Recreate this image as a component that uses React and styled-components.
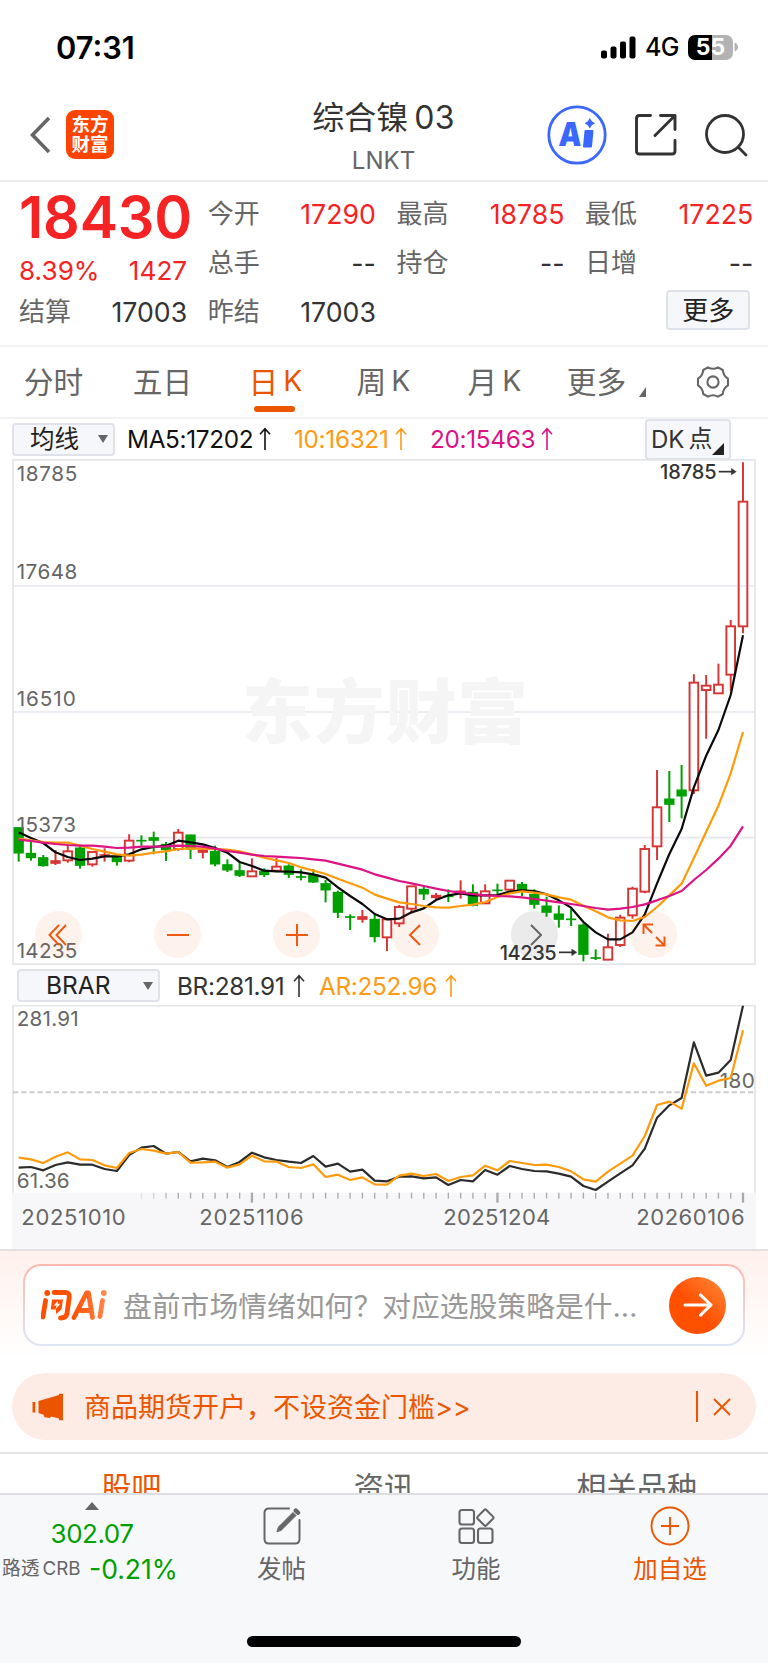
import styled, { createGlobalStyle } from "styled-components";

const GlobalStyle = createGlobalStyle`
    * {
        box-sizing: border-box;
    }
    body {
        margin: 0;
        background: #fff;
        font-family: Inter, "Noto Sans CJK SC", sans-serif;
        color: #333;
    }
    svg {
        display: block;
        flex: none;
    }
`;

// chart units are a third of a pixel
const STEP = 36.83;
const posX = (i) => 20 + i * STEP;
const toPoints = (data) => data.map((y, i) => `${posX(i).toFixed(1)},${y}`).join(" ");

// g: falling, r: rising, s: rising with a solid body / high, top, bottom, low
const candles = [
    ["g", 1105, 1105, 1183, 1208], ["g", 1148, 1182, 1197, 1205], ["g", 1188, 1195, 1221, 1223],
    ["s", 1173, 1204, 1214, 1218], ["r", 1159, 1176, 1205, 1211], ["g", 1158, 1166, 1220, 1229],
    ["r", 1178, 1178, 1217, 1223], ["s", 1168, 1186, 1190, 1208], ["g", 1187, 1191, 1209, 1220],
    ["r", 1126, 1144, 1206, 1210], ["g", 1129, 1143, 1147, 1160], ["g", 1118, 1135, 1145, 1186],
    ["g", 1149, 1155, 1173, 1206], ["r", 1110, 1120, 1171, 1175], ["g", 1127, 1127, 1171, 1200],
    ["s", 1165, 1172, 1181, 1198], ["g", 1160, 1176, 1216, 1222], ["g", 1201, 1216, 1234, 1239],
    ["g", 1210, 1234, 1250, 1254], ["r", 1198, 1236, 1253, 1253], ["g", 1228, 1236, 1248, 1254],
    ["r", 1197, 1222, 1236, 1240], ["g", 1216, 1220, 1247, 1257], ["g", 1231, 1252, 1256, 1264],
    ["g", 1230, 1246, 1270, 1272], ["g", 1263, 1273, 1294, 1330], ["g", 1295, 1299, 1361, 1377],
    ["g", 1366, 1372, 1376, 1413], ["s", 1353, 1372, 1382, 1391], ["g", 1366, 1380, 1434, 1450],
    ["r", 1378, 1380, 1436, 1476], ["r", 1338, 1343, 1394, 1404], ["r", 1281, 1281, 1350, 1363],
    ["g", 1281, 1290, 1306, 1323], ["s", 1302, 1308, 1317, 1320], ["g", 1291, 1310, 1314, 1329],
    ["s", 1264, 1295, 1299, 1319], ["g", 1276, 1299, 1340, 1342], ["r", 1276, 1296, 1334, 1334],
    ["g", 1274, 1292, 1296, 1306], ["r", 1264, 1264, 1293, 1293], ["g", 1269, 1275, 1296, 1311],
    ["g", 1291, 1305, 1337, 1349], ["g", 1313, 1340, 1361, 1373], ["g", 1339, 1364, 1382, 1406],
    ["g", 1350, 1379, 1383, 1401], ["g", 1393, 1397, 1487, 1507], ["g", 1471, 1495, 1499, 1503],
    ["r", 1424, 1464, 1503, 1503], ["r", 1367, 1375, 1459, 1464], ["r", 1283, 1288, 1370, 1379],
    ["r", 1158, 1169, 1299, 1303], ["r", 933, 1044, 1163, 1203], ["g", 936, 1019, 1037, 1089],
    ["g", 918, 992, 1012, 1078], ["r", 646, 670, 995, 1005], ["r", 648, 679, 694, 839],
    ["r", 614, 676, 704, 704], ["r", 483, 501, 648, 695], ["r", 10, 127, 503, 523],
];

const ma5 = [
    1120, 1137, 1152, 1180, 1194, 1203, 1199, 1192, 1192, 1186, 1171, 1164, 1160, 1145, 1150,
    1156, 1167, 1181, 1209, 1221, 1235, 1237, 1238, 1240, 1246, 1256, 1285, 1311, 1335, 1365,
    1381, 1379, 1360, 1348, 1323, 1309, 1303, 1309, 1309, 1308, 1298, 1294, 1296, 1306, 1324,
    1346, 1389, 1420, 1441, 1441, 1420, 1366, 1273, 1185, 1110, 985, 890, 813, 708, 529,
];
const ma10 = [
    1139, 1144, 1149, 1151, 1151, 1160, 1170, 1178, 1186, 1190, 1187, 1181, 1177, 1170, 1168,
    1169, 1170, 1172, 1177, 1186, 1196, 1204, 1212, 1225, 1235, 1245, 1259, 1273, 1286, 1307,
    1319, 1330, 1335, 1341, 1345, 1346, 1341, 1337, 1329, 1314, 1303, 1297, 1301, 1306, 1315,
    1322, 1340, 1357, 1375, 1384, 1386, 1374, 1344, 1309, 1274, 1198, 1118, 1040, 943, 819,
];
const ma20 = [
    1142, 1146, 1151, 1155, 1158, 1160, 1160, 1163, 1167, 1166, 1163, 1163, 1162, 1160, 1161,
    1163, 1169, 1176, 1181, 1187, 1191, 1193, 1195, 1197, 1201, 1205, 1214, 1223, 1232, 1246,
    1256, 1266, 1273, 1281, 1289, 1296, 1301, 1305, 1309, 1311, 1312, 1315, 1320, 1325, 1330,
    1335, 1341, 1347, 1352, 1349, 1344, 1336, 1324, 1311, 1296, 1263, 1233, 1199, 1160, 1102,
];
const br = [
    503, 501, 511, 495, 487, 494, 494, 507, 513, 465, 443, 438, 461, 456, 484, 476, 481, 501,
    486, 458, 472, 480, 485, 489, 468, 500, 491, 515, 509, 542, 544, 530, 529, 535, 532, 555,
    540, 544, 510, 524, 498, 507, 513, 514, 521, 530, 558, 570, 545, 520, 496, 446, 353, 316,
    294, 127, 227, 218, 180, 17,
];
const ar = [
    473, 478, 489, 470, 457, 478, 480, 496, 504, 459, 447, 452, 461, 456, 488, 487, 485, 503,
    493, 467, 484, 485, 501, 504, 493, 531, 524, 540, 532, 553, 554, 527, 521, 528, 522, 543,
    531, 526, 497, 511, 483, 489, 495, 494, 501, 514, 538, 545, 515, 491, 467, 408, 315, 305,
    326, 190, 257, 242, 234, 91,
];

const quotes = [
    [["今开", "17290", "up"], ["总手", "--"], ["昨结", "17003"]],
    [["最高", "18785", "up"], ["持仓", "--"]],
    [["最低", "17225", "up"], ["日增", "--"]],
];

const Candle = ({ index, kind, high, top, bottom, low }) => {
    const x = posX(index);
    const color = kind === "g" ? "#00a000" : "#d73434";
    if (kind === "r") {
        return (
            <g stroke={color} strokeWidth="5.8" fill="none">
                <path d={`M${x} ${high}V${top}M${x} ${bottom}V${low}`} />
                <rect x={x - 13} y={top + 1} width="26" height={bottom - top - 2} />
            </g>
        );
    }
    return (
        <g fill={color}>
            <rect x={x - 3} y={high} width="6" height={low - high} />
            <rect x={x - 15.5} y={top - 0.5} width="31" height={bottom - top + 1} />
        </g>
    );
};

const PriceChart = () => (
    <svg width="744" height="506" viewBox="0 0 2232 1518">
        <g stroke="#e6e8ee" strokeWidth="5">
            <path d="M3 381H2230M3 759H2230M3 1136H2230" />
            <rect x="3" y="2.5" width="2226" height="1513" fill="none" stroke="#e4e5e8" strokeWidth="5" />
        </g>
        <WatermarkText x="690" y="838" textLength="858">东方财富</WatermarkText>
        {candles.map(([kind, high, top, bottom, low], i) => (
            <Candle key={i} index={i} kind={kind} high={high} top={top} bottom={bottom} low={low} />
        ))}
        <g fill="none" strokeWidth="6.6" strokeLinejoin="round">
            <polyline points={toPoints(ma5)} stroke="#0a0a0a" />
            <polyline points={toPoints(ma10)} stroke="#ff9a0a" />
            <polyline points={toPoints(ma20)} stroke="#dd1285" />
        </g>
        <ScaleText x="14" y="67" textLength="182">18785</ScaleText>
        <ScaleText x="14" y="361" textLength="182">17648</ScaleText>
        <ScaleText x="14" y="740" textLength="177">16510</ScaleText>
        <ScaleText x="14" y="1119" textLength="178">15373</ScaleText>
        <ScaleText x="14" y="1498" textLength="182">14235</ScaleText>
        <MarkText x="1944" y="61" textLength="170">18785</MarkText>
        <MarkText x="1463" y="1504" textLength="171">14235</MarkText>
        <g stroke="#333" strokeWidth="5" fill="#333">
            <path d="M2120 38H2160" />
            <path d="M2158 28L2173 38L2158 48Z" strokeWidth="1" />
            <path d="M1641 1480H1682" />
            <path d="M1679 1470L1695 1480L1679 1490Z" strokeWidth="1" />
        </g>
    </svg>
);

const BrarChart = () => (
    <svg width="744" height="244" viewBox="0 15 2232 732">
        <rect x="0" y="578" width="2232" height="168" fill="#f7f7fa" />
        <path d="M3 578V17H2229V578" fill="none" stroke="#e4e5e8" strokeWidth="5" />
        <path d="M3 277H2229" stroke="#ccc" strokeWidth="6" strokeDasharray="16 8.5" />
        <g stroke="#aaa" strokeWidth="4">
            {br.map((v, i) => i > 9 && (
                <path
                    key={i}
                    d={`M${posX(i)} 578V${i % 20 === 19 ? 608 : 596}`}
                    strokeWidth={i % 20 === 19 ? 7 : 4}
                    opacity={i < 13 ? (i - 9) / 4 : 1}
                />
            ))}
        </g>
        <ScaleText x="14" y="77" textLength="186">281.91</ScaleText>
        <ScaleText x="14" y="565" textLength="159">61.36</ScaleText>
        <ScaleText x="2123" y="264" textLength="105">180</ScaleText>
        <g fill="none" strokeWidth="6.6" strokeLinejoin="round">
            <polyline points={toPoints(br)} stroke="#2b2b2b" />
            <polyline points={toPoints(ar)} stroke="#ff9a0a" />
        </g>
        <DateText x="28" y="674" textLength="313">20251010</DateText>
        <DateText x="562" y="674" textLength="313">20251106</DateText>
        <DateText x="1294" y="674" textLength="321">20251204</DateText>
        <DateText x="1873" y="674" textLength="325">20260106</DateText>
    </svg>
);

const UpArrow = () => (
    <svg width="14" height="24" viewBox="0 0 14 24" fill="none" stroke="currentColor" strokeWidth="1.6">
        <path d="M7 23V1.8M2 7.2L7 1.8L12 7.2" />
    </svg>
);

const App = () => {
    return (
        <Page>
            <GlobalStyle />
            <StatusBar>
                <Clock>07:31</Clock>
                <svg width="35" height="23" viewBox="0 0 35 23">
                    <rect x="0" y="14.5" width="6" height="8" rx="2" />
                    <rect x="9.5" y="10.5" width="6" height="12" rx="2" />
                    <rect x="19" y="5.5" width="6" height="17" rx="2" />
                    <rect x="28.5" y="0.5" width="6" height="22" rx="2" />
                </svg>
                <Network>4G</Network>
                <Battery>55</Battery>
                <svg width="4" height="10" viewBox="0 0 4 10" fill="#b3b3b3">
                    <path d="M0.5 0.5Q4 2 4 5T0.5 9.5Z" />
                </svg>
            </StatusBar>

            <Header>
                <svg width="22" height="38" viewBox="0 0 22 38" fill="none" stroke="#666" strokeWidth="3.6">
                    <path d="M20 2L3.5 19L20 36" />
                </svg>
                <Logo>东方<br />财富</Logo>
                <Title>
                    <Name>综合镍<span>03</span></Name>
                    <Code>LNKT</Code>
                </Title>
                <HeaderIcons>
                    <svg width="60" height="60" viewBox="0 0 60 60" fill="#3a68ff">
                        <circle cx="30" cy="30" r="28.2" fill="#fff" stroke="#3a68ff" strokeWidth="2.8" />
                        <AiText x="13.5" y="41" fontSize="33" textLength="23" lengthAdjust="spacingAndGlyphs" transform="skewX(-3)">A</AiText>
                        <path d="M38.5 26H45.5L44 41.5H37Z" strokeLinejoin="round" stroke="#3a68ff" strokeWidth="2" />
                        <path d="M42.8 13L44.8 16.2L48 18.2L44.8 20.2L42.8 23.4L40.8 20.2L37.6 18.2L40.8 16.2Z" />
                    </svg>
                    <svg width="42" height="42" viewBox="0 0 42 42" fill="none" stroke="#333" strokeWidth="2.9" strokeLinecap="round" strokeLinejoin="round">
                        <path d="M15.5 1.5H4.5Q1.5 1.5 1.5 4.5V37Q1.5 40 4.5 40H37Q40 40 40 37V26.5" />
                        <path d="M25.5 1.5H40V15.5M40 1.5L20 21.5" />
                    </svg>
                    <svg width="43" height="43" viewBox="0 0 43 43" fill="none" stroke="#333" strokeWidth="2.8" strokeLinecap="round">
                        <circle cx="20" cy="20" r="18.5" />
                        <path d="M33.5 33.5L41 41" />
                    </svg>
                </HeaderIcons>
            </Header>

            <Quote>
                <Summary>
                    <Price>18430</Price>
                    <Change>
                        <span>8.39%</span>
                        <span>1427</span>
                    </Change>
                    <Field>
                        <Label>结算</Label>
                        <Value>17003</Value>
                    </Field>
                </Summary>
                {quotes.map((column, i) => (
                    <Column key={i}>
                        {column.map(([label, value, trend]) => (
                            <Field key={label}>
                                <Label>{label}</Label>
                                <Value $trend={trend}>{value}</Value>
                            </Field>
                        ))}
                        {i === 2 && <MoreButton>更多</MoreButton>}
                    </Column>
                ))}
            </Quote>

            <PeriodTabs>
                <Period $width={107}>分时</Period>
                <Period $width={111}>五日</Period>
                <Period $width={115} $active>日<span>K</span></Period>
                <Period $width={101}>周<span>K</span></Period>
                <Period $width={121}>月<span>K</span></Period>
                <Period $width={83}>
                    更多
                </Period>
                <svg width="7" height="10" viewBox="0 0 7 10" fill="#666">
                    <path d="M7 0V10H0Z" />
                </svg>
                <Gear width="34" height="34" viewBox="0 0 34 34" fill="none" stroke="#666" strokeWidth="2.1" strokeLinejoin="round">
                    <path d="M12 2.3Q17 5.2 22 2.3L26.8 5Q27.2 10.8 32 13.6V20.4Q27.2 23.2 26.8 29L22 31.7Q17 28.8 12 31.7L7.2 29Q6.8 23.2 2 20.4V13.6Q6.8 10.8 7.2 5Z" />
                    <circle cx="17" cy="17" r="5.6" />
                </Gear>
            </PeriodTabs>

            <Indicators>
                <Picker $width={103} $pad={16}>
                    均线
                    <Caret />
                </Picker>
                <Reading $color="#111" $left={12} $width={131}>MA5:17202</Reading>
                <Arrow $color="#111"><UpArrow /></Arrow>
                <Reading $color="#ff9a14" $left={22} $width={100}>10:16321</Reading>
                <Arrow $color="#ff9a14"><UpArrow /></Arrow>
                <Reading $color="#dd1285" $left={22} $width={110}>20:15463</Reading>
                <Arrow $color="#dd1285"><UpArrow /></Arrow>
                <DkButton>
                    DK<b>点</b>
                    <svg width="12" height="12" viewBox="0 0 12 12" fill="#222">
                        <path d="M12 0V12H0Z" />
                    </svg>
                </DkButton>
            </Indicators>

            <ChartPanel>
                <PriceChart />
                <Controls>
                    <Control>
                        <svg width="22" height="22" viewBox="0 0 22 22"><path d="M11 1L1.5 11L11 21M18 1L8.5 11L18 21" /></svg>
                    </Control>
                    <Control>
                        <svg width="24" height="24" viewBox="0 0 24 24"><path d="M1 12H23" /></svg>
                    </Control>
                    <Control>
                        <svg width="24" height="24" viewBox="0 0 24 24"><path d="M1 12H23M12 1V23" /></svg>
                    </Control>
                    <Control>
                        <svg width="16" height="22" viewBox="0 0 16 22"><path d="M12 1L2 11L12 21" /></svg>
                    </Control>
                    <Control $muted>
                        <svg width="14" height="22" viewBox="0 0 14 22"><path d="M3 1L13 11L3 21" /></svg>
                    </Control>
                    <Control>
                        <svg width="24" height="24" viewBox="0 0 24 24"><path d="M1.5 11V1.5H11M1.5 1.5L10 10M13.5 22.5H22.5V13.5M22.5 22.5L14 14" /></svg>
                    </Control>
                </Controls>
            </ChartPanel>

            <Indicators $top={1}>
                <Picker $width={143} $pad={27} $inset={5}>
                    BRAR
                    <Caret />
                </Picker>
                <Reading $color="#333" $left={17} $width={115}>BR:281.91</Reading>
                <Arrow $color="#333"><UpArrow /></Arrow>
                <Reading $color="#ff9a14" $left={13} $width={125}>AR:252.96</Reading>
                <Arrow $color="#ff9a14"><UpArrow /></Arrow>
            </Indicators>
            <ChartPanel>
                <BrarChart />
            </ChartPanel>

            <AskArea>
                <AskBox>
                    <svg width="68" height="34" viewBox="0 0 68 34">
                        <defs>
                            <linearGradient id="ask" gradientUnits="userSpaceOnUse" x1="0" x2="68" y1="0" y2="0">
                                <stop offset="0.45" stopColor="#ff5000" />
                                <stop offset="1" stopColor="#ff8a50" />
                            </linearGradient>
                        </defs>
                        <g fill="none" stroke="url(#ask)" strokeWidth="4.8" strokeLinecap="round" strokeLinejoin="round">
                            <path d="M4.6 12.5L1.9 29" />
                            <path d="M13 4.5H24Q29 4.5 28.2 9.5L26 25.5Q25.2 30 19.5 30" />
                            <path d="M33 29.5L45.5 5H47.5L51.5 29.5M40 22.5H48" />
                            <path d="M61.5 12.5L59 28.5" />
                        </g>
                        <circle cx="6.2" cy="5" r="2.9" fill="#ff5000" />
                        <circle cx="62.8" cy="5" r="2.9" fill="#ff8a50" />
                        <path d="M11 11.5H22L20.5 21.5L15 26V21.5H9.8Z" fill="#ff5000" />
                        <path d="M17 12.8L12.8 17.4H15.6L14.6 21L19.4 15.8H16.5Z" fill="#fff" />
                    </svg>
                    <AskText>盘前市场情绪如何？对应选股策略是什…</AskText>
                    <AskButton>
                        <svg width="30" height="24" viewBox="0 0 30 24" fill="none" stroke="#fff" strokeWidth="3" strokeLinecap="round" strokeLinejoin="round">
                            <path d="M2 12H28M17.5 1.8L28 12L17.5 22.2" />
                        </svg>
                    </AskButton>
                </AskBox>
            </AskArea>

            <Promo>
                <svg width="33" height="28" viewBox="0 0 33 28" fill="#ec5500">
                    <path d="M0.5 9H3.3V19.5H0.5ZM6.5 8L27 2V0.8H31V27.3H27V25.6L19 23.5L18 25L12.5 24.2L11.5 21.8L6.5 20Z" />
                </svg>
                <PromoText>商品期货开户，不设资金门槛&gt;&gt;</PromoText>
                <PromoDivider />
                <svg width="18" height="18" viewBox="0 0 18 18" stroke="#ec5500" strokeWidth="1.9">
                    <path d="M1 1L17 17M17 1L1 17" />
                </svg>
            </Promo>

            <SectionTabs>
                <Section $active>股吧</Section>
                <Section>资讯</Section>
                <Section>相关品种</Section>
            </SectionTabs>

            <BottomBar>
                <Index>
                    <svg width="14" height="8" viewBox="0 0 14 8" fill="#666">
                        <path d="M7 0L14 8H0Z" />
                    </svg>
                    <IndexValue>302.07</IndexValue>
                    <IndexChange>
                        <small>路透<i>CRB</i></small>
                        <span>-0.21%</span>
                    </IndexChange>
                </Index>
                <Action $width={195}>
                    <svg width="38" height="38" viewBox="0 0 38 38" fill="none" stroke="#666" strokeWidth="2" strokeLinecap="round">
                        <path d="M26 1.5H6Q1.5 1.5 1.5 6V32Q1.5 36.5 6 36.5H32Q36.5 36.5 36.5 32V13" />
                        <path d="M14 24.5L15.5 20L30 5.5L33 8.5L18.5 23Z" fill="#666" strokeWidth="1" />
                        <path d="M32.8 3.6L35 5.8" strokeWidth="4.4" />
                    </svg>
                    发帖
                </Action>
                <Action $width={194}>
                    <svg width="38" height="38" viewBox="0 0 38 38" fill="none" stroke="#666" strokeWidth="2.1">
                        <rect x="2.5" y="3" width="14.5" height="14.5" rx="2.5" />
                        <rect x="2.5" y="21.5" width="14.5" height="14.5" rx="2.5" />
                        <rect x="21" y="21.5" width="14.5" height="14.5" rx="2.5" />
                        <path d="M27.2 2.9Q28.3 1.8 29.4 2.9L36 9.6Q37 10.7 36 11.8L29.4 18.3Q28.3 19.4 27.2 18.3L20.7 11.8Q19.7 10.7 20.7 9.6Z" />
                    </svg>
                    功能
                </Action>
                <Action $width={194} $active>
                    <svg width="40" height="40" viewBox="0 0 40 40" fill="none" stroke="#ec5500" strokeWidth="1.9">
                        <circle cx="20" cy="20" r="18.5" />
                        <path d="M11 20H29M20 11V29" />
                    </svg>
                    加自选
                </Action>
                <HomeIndicator />
            </BottomBar>
        </Page>
    );
};

const Page = styled.div`
    width: 768px;
    height: 1663px;
    overflow: hidden;
    display: flex;
    flex-direction: column;
    background: #fff;
    white-space: nowrap;
`;

const StatusBar = styled.div`
    height: 90px;
    padding: 4px 30px 0 56px;
    display: flex;
    align-items: center;
    color: #000;
`;

const Clock = styled.div`
    flex: 1;
    font-size: 30.8px;
    font-weight: 600;
`;

const Network = styled.div`
    width: 47px;
    padding-left: 9px;
    font-size: 25px;
    font-weight: 500;
    letter-spacing: -0.6px;
`;

const Battery = styled.div`
    width: 45px;
    height: 25px;
    margin-left: 5px;
    margin-right: 1px;
    border-radius: 7px;
    background: linear-gradient(90deg, #000 54%, #b3b3b3 54%);
    color: #fff;
    font-size: 23px;
    font-weight: 700;
    line-height: 25px;
    text-align: center;
`;

const Header = styled.div`
    height: 92px;
    padding: 0 20px 0 29px;
    display: flex;
    align-items: center;
    border-bottom: 2px solid #ececee;
`;

const Logo = styled.div`
    width: 48px;
    height: 49px;
    margin-left: 15px;
    margin-bottom: 1px;
    padding-top: 4px;
    border-radius: 9px;
    background: #ff4400;
    color: #fff;
    font-size: 18.5px;
    font-weight: 700;
    line-height: 20px;
    text-align: center;
`;

const Title = styled.div`
    flex: 1;
    padding: 2px 0 0 106px;
    display: flex;
    flex-direction: column;
    align-items: center;
`;

const Name = styled.div`
    font-size: 32px;
    line-height: 42px;
    height: 44px;

    span {
        margin-left: 6px;
        letter-spacing: 0.3px;
    }
`;

const Code = styled.div`
    height: 34px;
    font-size: 24px;
    line-height: 40px;
    color: #666;
`;

const HeaderIcons = styled.div`
    width: 201px;
    display: flex;
    align-items: center;
    justify-content: space-between;
`;

const AiText = styled.text`
    font-family: Inter, sans-serif;
    font-weight: 900;
`;

const Quote = styled.div`
    height: 165px;
    padding: 7px 0 0 19px;
    display: flex;
    gap: 20.5px;
    border-bottom: 2px solid #f2f2f4;
`;

const Column = styled.div`
    width: 168.2px;
    display: flex;
    flex-direction: column;
`;

const Summary = styled(Column)`
    color: #f52323;
`;

const Price = styled.div`
    height: 55px;
    font-size: 57.5px;
    font-weight: 600;
    line-height: 57px;
    letter-spacing: -0.2px;
`;

const Change = styled.div`
    height: 43px;
    display: flex;
    justify-content: space-between;
    font-size: 26.2px;
    line-height: 53px;
`;

const Field = styled.div`
    height: 49px;
    display: flex;
    justify-content: space-between;
    align-items: center;
`;

const Label = styled.span`
    height: 40px;
    font-size: 26px;
    line-height: 40px;
    color: #666;
`;

const Value = styled.span`
    font-size: 26.7px;
    color: ${({ $trend }) => ($trend === "up" ? "#f52323" : "#333")};
`;

const MoreButton = styled.div`
    width: 84px;
    height: 40px;
    margin: 3px 3px 0 auto;
    border: 2px solid #dfe2e8;
    border-radius: 4px;
    background: #f6f7fa;
    color: #222;
    font-size: 26px;
    line-height: 37px;
    text-align: center;
`;

const PeriodTabs = styled.div`
    height: 72px;
    display: flex;
    align-items: center;
    border-bottom: 2px solid #f2f2f4;

    > svg:nth-of-type(1) {
        margin: 20px 0 0 1px;
    }
`;

const Period = styled.div`
    width: ${({ $width }) => $width}px;
    height: 70px;
    padding-bottom: 4px;
    display: flex;
    justify-content: center;
    align-items: center;
    position: relative;
    font-size: 29.7px;
    color: ${({ $active }) => ($active ? "#ec5500" : "#666")};

    span {
        margin-left: 5px;
        font-size: 28.5px;
    }

    &::after {
        content: "";
        display: ${({ $active }) => ($active ? "block" : "none")};
        position: absolute;
        left: 36px;
        bottom: 5px;
        width: 41px;
        height: 6px;
        border-radius: 3px;
        background: #ec5500;
    }
`;

const Gear = styled.svg`
    margin-left: 50px;
`;

const Indicators = styled.div`
    height: 40px;
    padding: ${({ $top }) => $top || 0}px 0 0 12px;
    display: flex;
    align-items: center;
`;

const Picker = styled.div`
    width: ${({ $width }) => $width}px;
    height: 33px;
    margin-left: ${({ $inset }) => $inset || 0}px;
    padding: 0 5px 0 ${({ $pad }) => $pad}px;
    display: flex;
    align-items: center;
    justify-content: space-between;
    border: 2px solid #dfe2e8;
    border-radius: 4px;
    background: #f6f7fa;
    color: #222;
    font-size: 24.5px;
    line-height: 29px;
`;

const Caret = styled.i`
    border: 5px solid transparent;
    border-top: 8px solid #666;
    border-bottom: 0;
`;

const Reading = styled.div`
    width: ${({ $width }) => $width}px;
    margin-left: ${({ $left }) => $left}px;
    color: ${({ $color }) => $color};
    font-size: 24.3px;
    letter-spacing: -0.3px;
`;

const Arrow = styled.div`
    color: ${({ $color }) => $color};
`;

const DkButton = styled.div`
    width: 86px;
    height: 41px;
    margin-left: auto;
    margin-right: 37px;
    padding-left: 4px;
    display: flex;
    align-items: center;
    border: 2px solid #dfe2e8;
    border-radius: 4px;
    background: #f6f7fa;
    font-size: 24px;

    b {
        margin-left: 4px;
        font-weight: 400;
        line-height: 35px;
        height: 36px;
    }
    svg {
        align-self: flex-end;
        margin: 0 0 3px 0;
    }
`;

const ChartPanel = styled.div`
    position: relative;
    padding-left: 12px;
    flex: none;
`;

const Controls = styled.div`
    position: absolute;
    left: 35px;
    bottom: 7px;
    display: flex;
    gap: 72px;
`;

const Control = styled.div`
    width: 47px;
    height: 47px;
    display: flex;
    align-items: center;
    justify-content: center;
    border-radius: 50%;
    background: ${({ $muted }) => ($muted ? "rgba(90, 90, 90, 0.12)" : "rgba(245, 95, 25, 0.08)")};

    svg {
        fill: none;
        stroke: ${({ $muted }) => ($muted ? "#666" : "#f05a10")};
        stroke-width: 2;
    }
`;

const ScaleText = styled.text`
    font-family: Inter, sans-serif;
    font-size: 62px;
    fill: #666;
`;

const MarkText = styled(ScaleText)`
    font-size: 60px;
    font-weight: 500;
    fill: #333;
`;

const DateText = styled(ScaleText)`
    font-size: 66px;
`;

const WatermarkText = styled.text`
    font-family: "Noto Sans CJK SC", sans-serif;
    font-size: 212px;
    font-weight: 900;
    fill: #f5f5f5;
`;

const AskArea = styled.div`
    height: 111px;
    padding: 13px 23px 0 23px;
    flex: none;
    border-top: 2px solid #e2e2e6;
    background: linear-gradient(#fff1ed, #fff);
`;

const AskBox = styled.div`
    height: 82px;
    padding: 0 17px 0 16px;
    display: flex;
    align-items: center;
    border: 2.5px solid transparent;
    border-radius: 18px;
    background: linear-gradient(#fff, #fff) padding-box, linear-gradient(#ffb8ad, #dde6f7) border-box;
`;

const AskText = styled.div`
    flex: 1;
    padding-bottom: 2px;
    margin-left: 14px;
    font-size: 28.8px;
    color: #999;
`;

const AskButton = styled.div`
    width: 57px;
    height: 57px;
    display: flex;
    align-items: center;
    justify-content: center;
    border-radius: 50%;
    background: linear-gradient(45deg, #ff5000 45%, #ff8a3c);
`;

const Promo = styled.div`
    height: 67px;
    margin: 13px 12px 12px;
    padding: 0 25px 0 20px;
    flex: none;
    display: flex;
    align-items: center;
    border-radius: 34px;
    background: #fcece5;
    color: #ec5500;
`;

const PromoText = styled.div`
    flex: 1;
    padding-bottom: 2px;
    margin-left: 19px;
    font-size: 27px;
`;

const PromoDivider = styled.div`
    width: 2px;
    height: 31px;
    margin-right: 15px;
    background: #ec5500;
`;

const SectionTabs = styled.div`
    height: 41px;
    padding: 13px 5px 0 5px;
    flex: none;
    display: flex;
    overflow: hidden;
    border-top: 2px solid #e6e6ea;
`;

const Section = styled.div`
    flex: 1;
    font-size: 30.2px;
    line-height: 43px;
    text-align: center;
    color: ${({ $active }) => ($active ? "#ec5500" : "#666")};
`;

const BottomBar = styled.div`
    height: 170px;
    flex: none;
    display: flex;
    position: relative;
    border-top: 2px solid #dcdee2;
    background: #f7f8fa;
`;

const Index = styled.div`
    width: 184px;
    padding-top: 7px;
    display: flex;
    flex-direction: column;
    align-items: center;
    color: #00a000;
`;

const IndexValue = styled.div`
    margin-top: 7px;
    font-size: 26px;
    line-height: 33px;
    letter-spacing: -0.5px;
`;

const IndexChange = styled.div`
    width: 100%;
    padding-left: 2px;
    display: flex;
    align-items: center;
    font-size: 26.5px;
    line-height: 38px;

    small {
        width: 87px;
        font-size: 18.8px;
        line-height: 36px;
        color: #666;
    }
    i {
        font-style: normal;
        margin-left: 3px;
    }
`;

const Action = styled.div`
    width: ${({ $width }) => $width}px;
    height: 100px;
    padding-top: 11px;
    display: flex;
    flex-direction: column;
    align-items: center;
    font-size: 24.5px;
    line-height: 47px;
    color: ${({ $active }) => ($active ? "#ec5500" : "#666")};

    svg {
        height: 40px;
    }
`;

const HomeIndicator = styled.div`
    position: absolute;
    left: 247px;
    bottom: 16px;
    width: 274px;
    height: 11px;
    border-radius: 6px;
    background: #000;
`;

export default App;
